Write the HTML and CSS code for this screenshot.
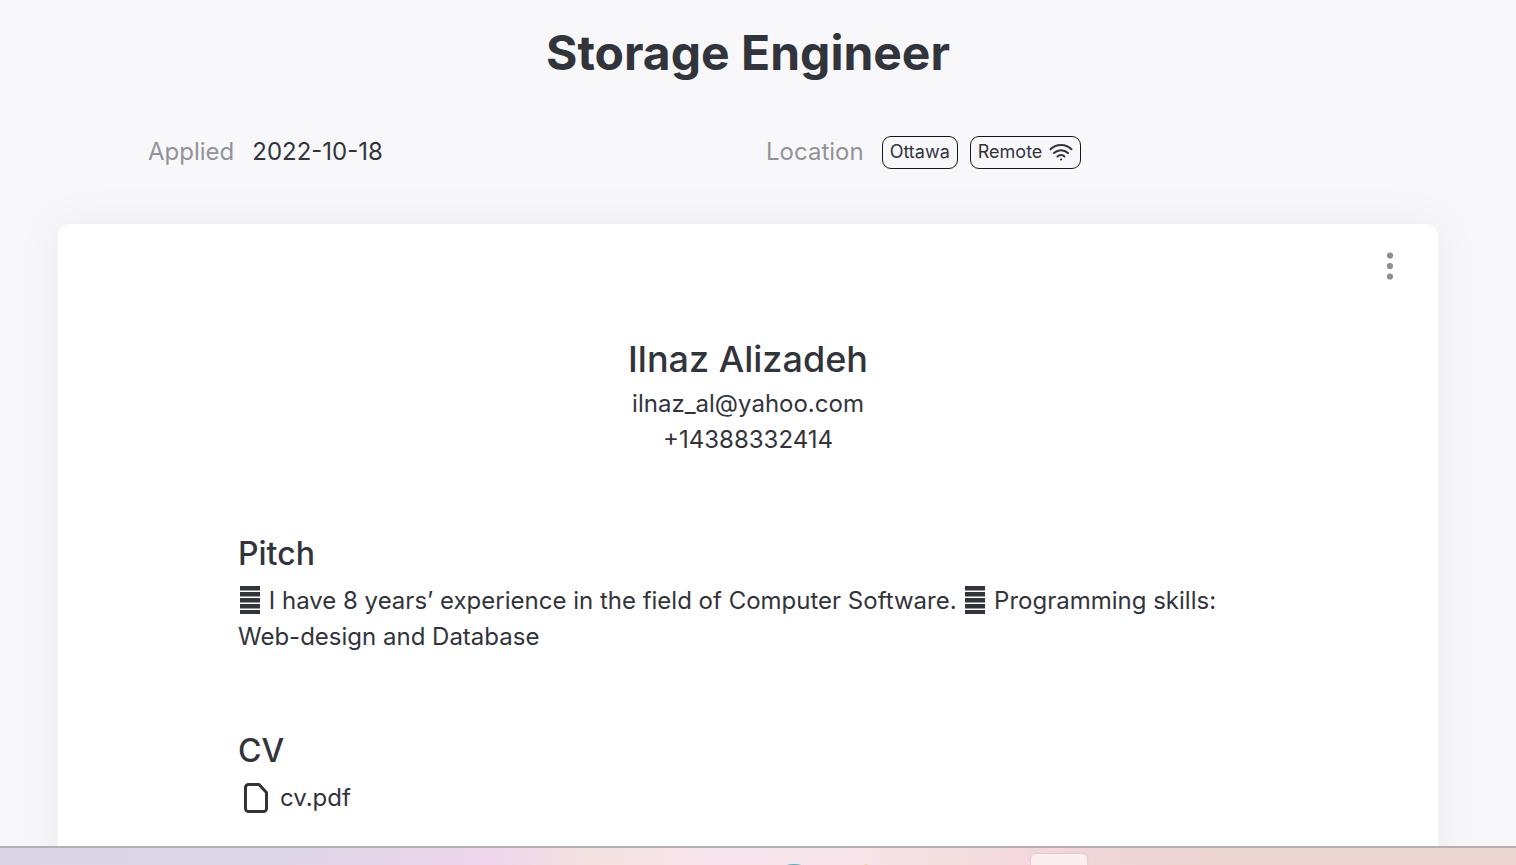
FILE: index.html
```html
<!DOCTYPE html>
<html lang="en">
<head>
<meta charset="utf-8">
<title>Storage Engineer</title>
<link rel="stylesheet" href="styles.css">
</head>
<body>
<main class="page">
  <h1 class="title">Storage Engineer</h1>
  <dl class="meta">
    <div class="meta-item">
      <dt class="meta-label">Applied</dt>
      <dd class="meta-value">2022-10-18</dd>
    </div>
    <div class="meta-item">
      <dt class="meta-label">Location</dt>
      <dd class="meta-value tags">
        <span class="tag">Ottawa</span>
        <span class="tag">Remote
          <svg class="wifi" viewBox="0 0 24 18" aria-hidden="true"><path d="M1.5 6.2C7.5.6 16.500.6 22.500 6.200M5 10C9 6.200 15 6.200 19 10M8.500 13.500C10.500 11.600 13.500 11.600 15.500 13.500"/><circle cx="12" cy="16.500" r="1.100"/></svg>
        </span>
      </dd>
    </div>
  </dl>
  <article class="card">
    <div class="card-head">
      <button class="more" type="button" aria-label="More actions">
        <svg viewBox="0 0 8 30" aria-hidden="true"><circle cx="4" cy="4.500" r="3.100"/><circle cx="4" cy="15" r="3.100"/><circle cx="4" cy="25.500" r="3.100"/></svg>
      </button>
    </div>
    <header class="person">
      <h2 class="name">Ilnaz Alizadeh</h2>
      <p>ilnaz_al@yahoo.com</p>
      <p>+14388332414</p>
    </header>
    <section class="section">
      <h3 class="heading">Pitch</h3>
      <p><svg class="bullet" viewBox="0 0 24 28" aria-hidden="true"><path d="M2 0h20v4.500H2zM2 6h20v4.500H2zM2 12h20v4.500H2zM2 18h20v4.500H2zM2 24h20v4H2z"/></svg> I have 8 years’ experience in the field of Computer Software. <svg class="bullet" viewBox="0 0 24 28" aria-hidden="true"><path d="M2 0h20v4.500H2zM2 6h20v4.500H2zM2 12h20v4.500H2zM2 18h20v4.500H2zM2 24h20v4H2z"/></svg> Programming skills: Web-design and Database</p>
    </section>
    <section class="section">
      <h3 class="heading">CV</h3>
      <a class="file" href="#cv"><svg class="file-icon" viewBox="0 0 36 36" aria-hidden="true"><path d="M10.500 4.500H21L28.500 12.500V28.500a3 3 0 0 1-3 3h-15a3 3 0 0 1-3-3v-21a3 3 0 0 1 3-3z"/></svg>cv.pdf</a>
    </section>
  </article>
</main>
<footer class="dock">
  <svg class="dock-app" viewBox="0 0 100 17" aria-hidden="true"><ellipse class="teal" cx="21" cy="21" rx="12" ry="5"/><circle class="yellow" cx="93" cy="18" r="2"/></svg>
  <span class="dock-active"></span>
</footer>
</body>
</html>
```
FILE: styles.css
```css
* {
  box-sizing: border-box;
}

body {
  margin: 0;
  height: 100vh;
  display: flex;
  flex-direction: column;
  overflow: hidden;
  background: #f8f8fb;
  color: #32343b;
  font: 400 24px/36px Inter, sans-serif;
}

h1, h2, h3, p, dl, dd {
  margin: 0;
}

.page {
  flex: 1;
  min-height: 0;
  overflow: hidden;
  display: flex;
  flex-direction: column;
  padding: 17px 78px 0 58px;
}

.title {
  font-size: 48px;
  line-height: 72px;
  font-weight: 700;
  text-align: center;
}

.meta {
  display: grid;
  grid-template-columns: 1fr 1fr;
  gap: 36px;
  padding: 45px 90px 54px;
}

.meta-item {
  display: flex;
  gap: 18px;
}

.meta-label {
  color: #929398;
}

.tags {
  display: flex;
  align-items: center;
  gap: 12px;
}

.tag {
  display: flex;
  align-items: center;
  gap: 7px;
  height: 33px;
  padding: 0 7px;
  border: 1px solid #17181c;
  border-radius: 9px;
  font-size: 18px;
}

.wifi {
  width: 24px;
  height: 18px;
  fill: #32343b;
}

.wifi path {
  fill: none;
  stroke: #32343b;
  stroke-width: 2;
  stroke-linecap: round;
}

.card {
  flex: 1 0 auto;
  padding: 24px 40px 60px;
  border-radius: 12px;
  background: #fff;
  box-shadow: 0 0 48px rgba(0, 0, 0, 0.06);
}

.card-head {
  display: flex;
  justify-content: flex-end;
}

.more {
  padding: 3px 4px;
  border: 0;
  background: none;
  line-height: 0;
}

.more svg {
  width: 8px;
  height: 30px;
  fill: #8e8e90;
}

.person {
  margin-top: 48px;
  text-align: center;
}

.name {
  font-size: 36px;
  line-height: 54px;
  font-weight: 500;
}

.section {
  margin-top: 72px;
  padding: 0 140px;
}

.heading {
  font-size: 32px;
  line-height: 48px;
  font-weight: 500;
  margin-bottom: 5px;
}

.bullet {
  width: 24px;
  height: 28px;
  vertical-align: -5px;
  fill: #32343b;
}

.file {
  display: inline-flex;
  align-items: center;
  gap: 6px;
  color: inherit;
  text-decoration: none;
}

.file-icon {
  width: 36px;
  height: 36px;
  fill: none;
  stroke: #32343b;
  stroke-width: 3;
  stroke-linejoin: round;
}

.dock {
  position: relative;
  height: 19px;
  border-top: 2px solid #b5aeb4;
  background: linear-gradient(90deg, #dcd5e7 0, #dcd6e8 17%, #e1d5e8 22%, #eed5ec 32%, #f5e2e1 39%, #f8e4ec 47%, #f8e4eb 55%, #f4dfdf 63%, #f3d7df 68%, #ecd5d2 76%, #ead5d0 100%);
}

.dock-app {
  position: absolute;
  left: 51%;
  bottom: 0;
  width: 100px;
  height: 17px;
}

.teal {
  fill: #45b3c4;
}

.yellow {
  fill: #f2df7c;
}

.dock-active {
  position: absolute;
  left: 68%;
  top: 6px;
  bottom: 0;
  width: 56px;
  border-radius: 5px 5px 0 0;
  background: #fbefef;
  box-shadow: 0 0 2px #c9aeb4;
}
```
